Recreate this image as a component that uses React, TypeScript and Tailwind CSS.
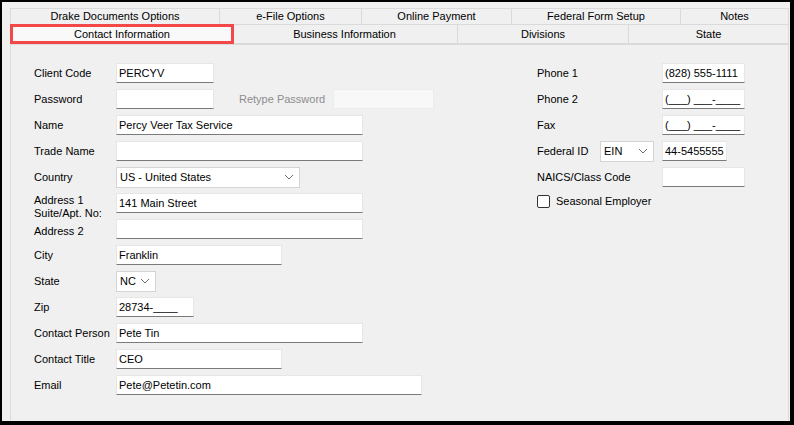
import type { ReactNode } from 'react';

const topTabs = [
  { label: 'Drake Documents Options', w: 'w-[210px]' },
  { label: 'e-File Options', w: 'w-[142px]' },
  { label: 'Online Payment', w: 'w-[150px]' },
  { label: 'Federal Form Setup', w: 'w-[169px]' },
  { label: 'Notes', w: 'flex-1' },
];

const bottomTabs = [
  { label: 'Business Information', w: 'w-[226px] -ml-[2px]' },
  { label: 'Divisions', w: 'w-[171px]' },
  { label: 'State', w: 'flex-1' },
];

function Chevron() {
  return (
    <svg width="10" height="6" viewBox="0 0 10 6" className="shrink-0">
      <polyline points="1,1 5,5 9,1" fill="none" stroke="#6b6b6b" strokeWidth="1" />
    </svg>
  );
}

function TextBox({ value = '', w, disabled }: { value?: string; w: string; disabled?: boolean }) {
  return (
    <div
      className={`${w} h-[20px] flex items-center px-[2px] border ${
        disabled
          ? 'bg-[#f8f8f8] border-[#ececec]'
          : 'bg-white border-[#e6e6e6] border-b-[#7a7a7a]'
      } whitespace-nowrap overflow-hidden`}
    >
      {value}
    </div>
  );
}

function Select({ value, w }: { value: string; w: string }) {
  return (
    <div className={`${w} h-[21px] flex items-center justify-between pl-[3px] pr-[5px] bg-white border border-[#d4d4d4]`}>
      <span>{value}</span>
      <Chevron />
    </div>
  );
}

function Row({ label, children }: { label: ReactNode; children?: ReactNode }) {
  return (
    <div className="flex items-center h-[26px]">
      <div className="w-[82px] shrink-0">{label}</div>
      {children}
    </div>
  );
}

function RightRow({ label, children }: { label: string; children?: ReactNode }) {
  return (
    <div className="flex items-center h-[26px]">
      <div className="w-[125px] shrink-0">{label}</div>
      {children}
    </div>
  );
}

export default function App() {
  return (
    <div
      className="w-[794px] h-[425px] bg-[#f0f0f0] border-black border-l-2 border-t-2 border-r-4 border-b-4 pl-[8px] pt-[6px] pr-[1px] flex flex-col text-[11px] text-black"
      style={{ fontFamily: '"Liberation Sans", Arial, sans-serif' }}
    >
      {/* tab rows */}
      <div className="flex h-[17px]">
        {topTabs.map((t, i) => (
          <div
            key={t.label}
            className={`${t.w} flex items-center justify-center border border-[#dadada] bg-[#f0f0f0] ${
              i > 0 ? 'border-l-0' : ''
            }`}
          >
            {t.label}
          </div>
        ))}
      </div>
      <div className="flex h-[19px]">
        <div className="w-[224px] flex items-center justify-center bg-[#f9f9f9] border-[3px] border-[#f34848] -mt-px relative z-10">
          Contact Information
        </div>
        {bottomTabs.map((t) => (
          <div
            key={t.label}
            className={`${t.w} flex items-center justify-center border border-[#dadada] border-l-0 border-t-0`}
          >
            {t.label}
          </div>
        ))}
      </div>

      {/* content panel */}
      <div className="flex-1 border border-[#dadada] border-b-0 bg-[#f0f0f0] pl-[23px] pt-[15px] flex">
        <div className="w-[503px] shrink-0 flex flex-col">
          <Row label="Client Code">
            <TextBox value="PERCYV" w="w-[98px]" />
          </Row>
          <Row label="Password">
            <TextBox w="w-[98px]" />
            <span className="ml-[25px] w-[94px] text-[#8d8d8d]">Retype Password</span>
            <TextBox w="w-[101px]" disabled />
          </Row>
          <Row label="Name">
            <TextBox value="Percy Veer Tax Service" w="w-[247px]" />
          </Row>
          <Row label="Trade Name">
            <TextBox w="w-[247px]" />
          </Row>
          <Row label="Country">
            <Select value="US - United States" w="w-[184px]" />
          </Row>
          <div className="flex items-start h-[26px]">
            <div className="w-[82px] shrink-0 leading-[13px] mt-[4px]">
              Address 1
              <br />
              Suite/Apt. No:
            </div>
            <div className="mt-[3px]">
              <TextBox value="141 Main Street" w="w-[247px]" />
            </div>
          </div>
          <Row label={<span className="relative top-[2px]">Address 2</span>}>
            <TextBox w="w-[247px]" />
          </Row>
          <Row label="City">
            <TextBox value="Franklin" w="w-[166px]" />
          </Row>
          <Row label="State">
            <Select value="NC" w="w-[40px]" />
          </Row>
          <Row label="Zip">
            <TextBox value="28734-____" w="w-[78px]" />
          </Row>
          <Row label="Contact Person">
            <TextBox value="Pete Tin" w="w-[247px]" />
          </Row>
          <Row label="Contact Title">
            <TextBox value="CEO" w="w-[166px]" />
          </Row>
          <Row label="Email">
            <TextBox value="Pete@Petetin.com" w="w-[306px]" />
          </Row>
        </div>

        <div className="flex flex-col">
          <RightRow label="Phone 1">
            <TextBox value="(828) 555-1111" w="w-[83px]" />
          </RightRow>
          <RightRow label="Phone 2">
            <TextBox value="(___) ___-____" w="w-[83px]" />
          </RightRow>
          <RightRow label="Fax">
            <TextBox value="(___) ___-____" w="w-[83px]" />
          </RightRow>
          <div className="flex items-center h-[26px]">
            <div className="w-[63px] shrink-0">Federal ID</div>
            <Select value="EIN" w="w-[54px]" />
            <div className="ml-[8px]">
              <TextBox value="44-5455555" w="w-[65px]" />
            </div>
          </div>
          <RightRow label="NAICS/Class Code">
            <TextBox w="w-[83px]" />
          </RightRow>
          <div className="flex items-center h-[22px]">
            <div className="w-[13px] h-[13px] border border-[#333] rounded-[2px] bg-white" />
            <span className="ml-[6px]">Seasonal Employer</span>
          </div>
        </div>
      </div>
    </div>
  );
}
